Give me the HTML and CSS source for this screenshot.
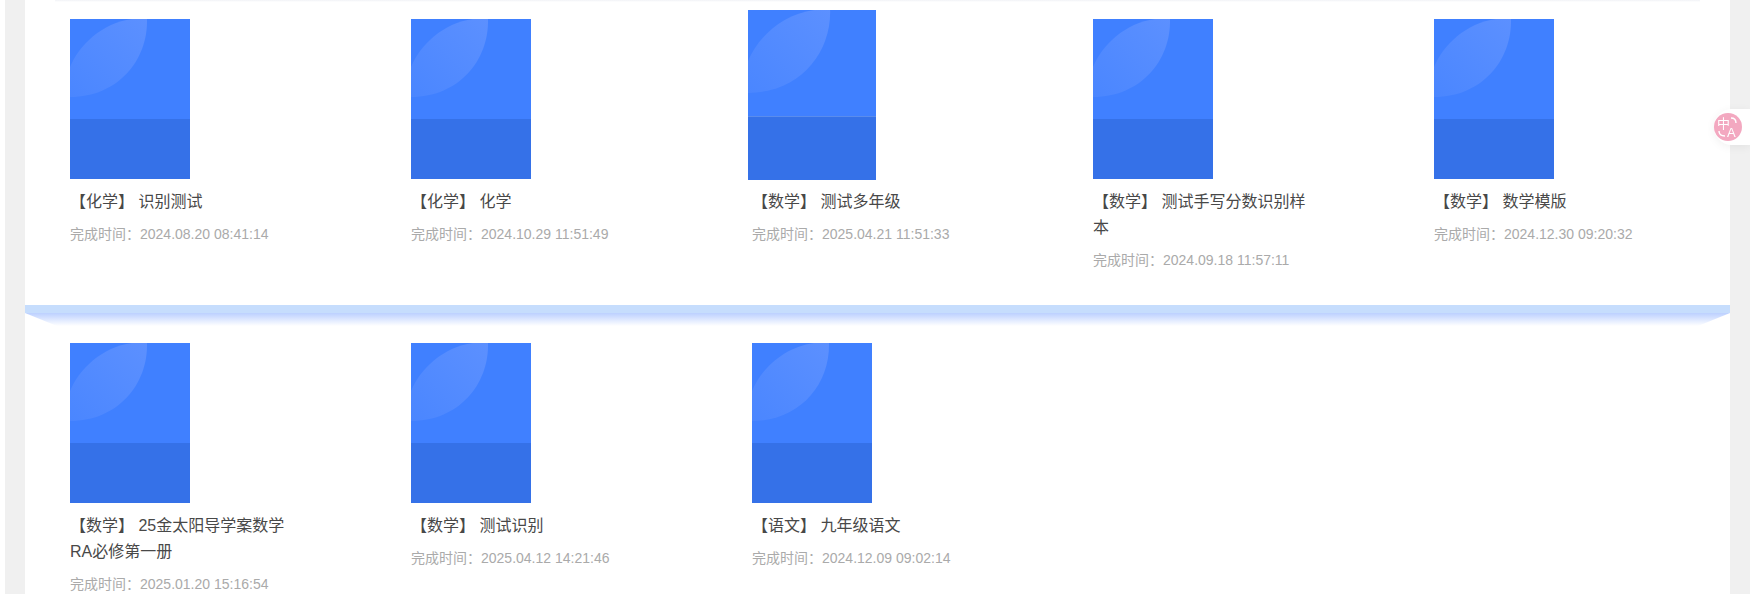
FILE: index.html
```html
<!DOCTYPE html>
<html lang="zh-CN">
<head>
<meta charset="UTF-8">
<meta name="viewport" content="width=device-width, initial-scale=1">
<title>我的作业</title>
<link rel="stylesheet" href="styles.css">
</head>
<body>

<svg class="defs" width="0" height="0" aria-hidden="true">
  <linearGradient id="leaf" x1="0" y1="1" x2="1" y2="0">
    <stop offset="0" stop-color="#4a86ff"/>
    <stop offset="1" stop-color="#5c90ff"/>
  </linearGradient>
  <symbol id="book" viewBox="0 0 120 160">
    <rect width="120" height="100" fill="#4080ff"/>
    <rect y="100" width="120" height="60" fill="#3571e8"/>
    <path d="M0 48C9 26 32 4 62 0H77C78 42 47 78 0 78Z" fill="url(#leaf)"/>
  </symbol>
</svg>

<div class="page">
  <div class="panel">
    <div class="shelf-end"></div>

    <div class="row row-first">
      <div class="item">
        <svg class="cover"><use href="#book"/></svg>
        <div class="name">【化学】 识别测试</div>
        <div class="time">完成时间：2024.08.20 08:41:14</div>
      </div>
      <div class="item">
        <svg class="cover"><use href="#book"/></svg>
        <div class="name">【化学】 化学</div>
        <div class="time">完成时间：2024.10.29 11:51:49</div>
      </div>
      <div class="item item-hover">
        <svg class="cover"><use href="#book"/></svg>
        <div class="name">【数学】 测试多年级</div>
        <div class="time">完成时间：2025.04.21 11:51:33</div>
      </div>
      <div class="item">
        <svg class="cover"><use href="#book"/></svg>
        <div class="name">【数学】 测试手写分数识别样本</div>
        <div class="time">完成时间：2024.09.18 11:57:11</div>
      </div>
      <div class="item">
        <svg class="cover"><use href="#book"/></svg>
        <div class="name">【数学】 数学模版</div>
        <div class="time">完成时间：2024.12.30 09:20:32</div>
      </div>
    </div>

    <div class="shelf"></div>

    <div class="row">
      <div class="item">
        <svg class="cover"><use href="#book"/></svg>
        <div class="name">【数学】 25金太阳导学案数学RA必修第一册</div>
        <div class="time">完成时间：2025.01.20 15:16:54</div>
      </div>
      <div class="item">
        <svg class="cover"><use href="#book"/></svg>
        <div class="name">【数学】 测试识别</div>
        <div class="time">完成时间：2025.04.12 14:21:46</div>
      </div>
      <div class="item">
        <svg class="cover"><use href="#book"/></svg>
        <div class="name">【语文】 九年级语文</div>
        <div class="time">完成时间：2024.12.09 09:02:14</div>
      </div>
    </div>
  </div>
</div>

<div class="translate-tab">
  <div class="translate-btn">
    <svg width="28" height="28" viewBox="0 0 28 28">
      <text class="t-zh" x="3" y="15">中</text>
      <text class="t-en" x="13" y="24">A</text>
      <path d="M17 5c3 0 5 2 5 5M5 18c0 3 2 5 6 5" fill="none" stroke="#fff" stroke-width="1.4"/>
    </svg>
  </div>
</div>

</body>
</html>
```

FILE: styles.css
```css
html, body {
  margin: 0;
  padding: 0;
  height: 100%;
  overflow: hidden;
}
body {
  background: #fff;
  font-family: "Liberation Sans", "Noto Sans CJK SC", sans-serif;
  padding-left: 5px;
  box-sizing: border-box;
}
.defs {
  display: block;
  height: 0;
}
.page {
  background: #f0f0f0;
  padding: 0 20px;
  height: 100%;
  box-sizing: border-box;
}
.panel {
  background: #fff;
  height: 100%;
}
.shelf-end {
  height: 2px;
  margin: 0 30px;
  background: linear-gradient(#f1f2f6, #fff);
}
.row {
  display: grid;
  grid-template-columns: repeat(5, 341px);
  padding: 17px 0 0 45px;
}
.row-first {
  height: 286px;
}
.item {
  width: 220px;
}
.cover {
  display: block;
  width: 120px;
  height: 160px;
}
.item-hover .cover {
  transform: translateY(1px) scale(1.0667, 1.0625);
  transform-origin: center bottom;
}
.name {
  margin-top: 10px;
  font-size: 16px;
  line-height: 26px;
  color: #484848;
}
.time {
  margin-top: 6px;
  font-size: 14px;
  line-height: 26px;
  color: #aaa;
}
.shelf {
  position: relative;
  height: 8px;
  margin-bottom: 13px;
  background: #c6ddfd;
}
.shelf::after {
  content: "";
  position: absolute;
  left: 0;
  right: 0;
  top: 8px;
  height: 13px;
  background: linear-gradient(#bcd0ff, #fff);
  clip-path: polygon(0 0, 100% 0, calc(100% - 32px) 100%, 32px 100%);
}
.translate-tab {
  position: fixed;
  right: 0;
  top: 109px;
  width: 36px;
  height: 36px;
  padding: 4px 0;
  box-sizing: border-box;
  background: #fff;
  border-radius: 18px 0 0 18px;
  box-shadow: 0 2px 10px rgba(0, 0, 0, 0.06);
}
.translate-btn {
  width: 28px;
  height: 28px;
  border-radius: 50%;
  background: #f3a8c0;
}
.translate-btn svg {
  display: block;
}
.t-zh {
  font-family: "Noto Sans CJK SC", sans-serif;
  font-size: 13px;
  fill: #fff;
}
.t-en {
  font-family: "Liberation Sans", sans-serif;
  font-size: 13px;
  fill: #fff;
}
```
